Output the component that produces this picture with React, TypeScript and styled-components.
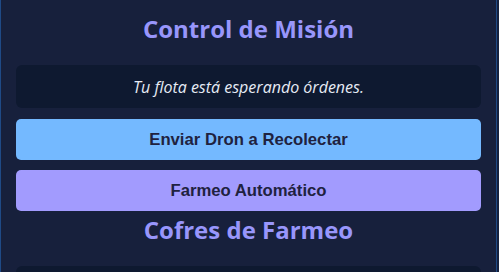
import React from 'react';
import styled, { createGlobalStyle } from 'styled-components';

const Global = createGlobalStyle`
  html, body {
    margin: 0;
    padding: 0;
    background: #16213d;
    overflow: hidden;
  }
  * { box-sizing: border-box; }
`;

const Panel = styled.div`
  width: 497px;
  height: 272px;
  overflow: hidden;
  background: #17203c;
  border-left: 1px solid #1f4a86;
  border-right: 1px solid #1f4a86;
  padding: 13px 15px 0 15px;
  display: flex;
  flex-direction: column;
`;

const Heading = styled.h2<{ $after?: number }>`
  margin: 0 0 ${p => p.$after ?? 20}px 0;
  text-align: center;
  font-family: "Open Sans", "Noto Sans", sans-serif;
  font-weight: 700;
  font-size: 24px;
  line-height: 32px;
  color: #9896fb;
`;

const Status = styled.div`
  flex-shrink: 0;
  background: #0e1930;
  border-radius: 6px;
  height: 43px;
  display: flex;
  align-items: center;
  justify-content: center;
  font-family: "Open Sans", "Noto Sans", sans-serif;
  font-style: italic;
  font-size: 16px;
  color: #e6ebf5;
  margin-bottom: 11px;
`;

const Button = styled.button<{ $color: string }>`
  display: block;
  flex-shrink: 0;
  width: 100%;
  height: 41px;
  border: none;
  border-radius: 5px;
  background: ${p => p.$color};
  color: #1f2240;
  font-family: "Liberation Sans", Arial, sans-serif;
  font-weight: 700;
  font-size: 16.7px;
  cursor: pointer;
  margin-bottom: 10px;
  &:last-of-type { margin-bottom: 3px; }
`;

const Chests = styled.div`
  flex-shrink: 0;
  background: #0e1930;
  border-radius: 6px 6px 0 0;
  height: 40px;
`;

export default function App() {
  return (
    <>
      <Global />
      <Panel>
        <Heading>Control de Misión</Heading>
        <Status>Tu flota está esperando órdenes.</Status>
        <Button $color="#74b9ff">Enviar Dron a Recolectar</Button>
        <Button $color="#a29bfe">Farmeo Automático</Button>
        <Heading $after={20}>Cofres de Farmeo</Heading>
        <Chests />
      </Panel>
    </>
  );
}
